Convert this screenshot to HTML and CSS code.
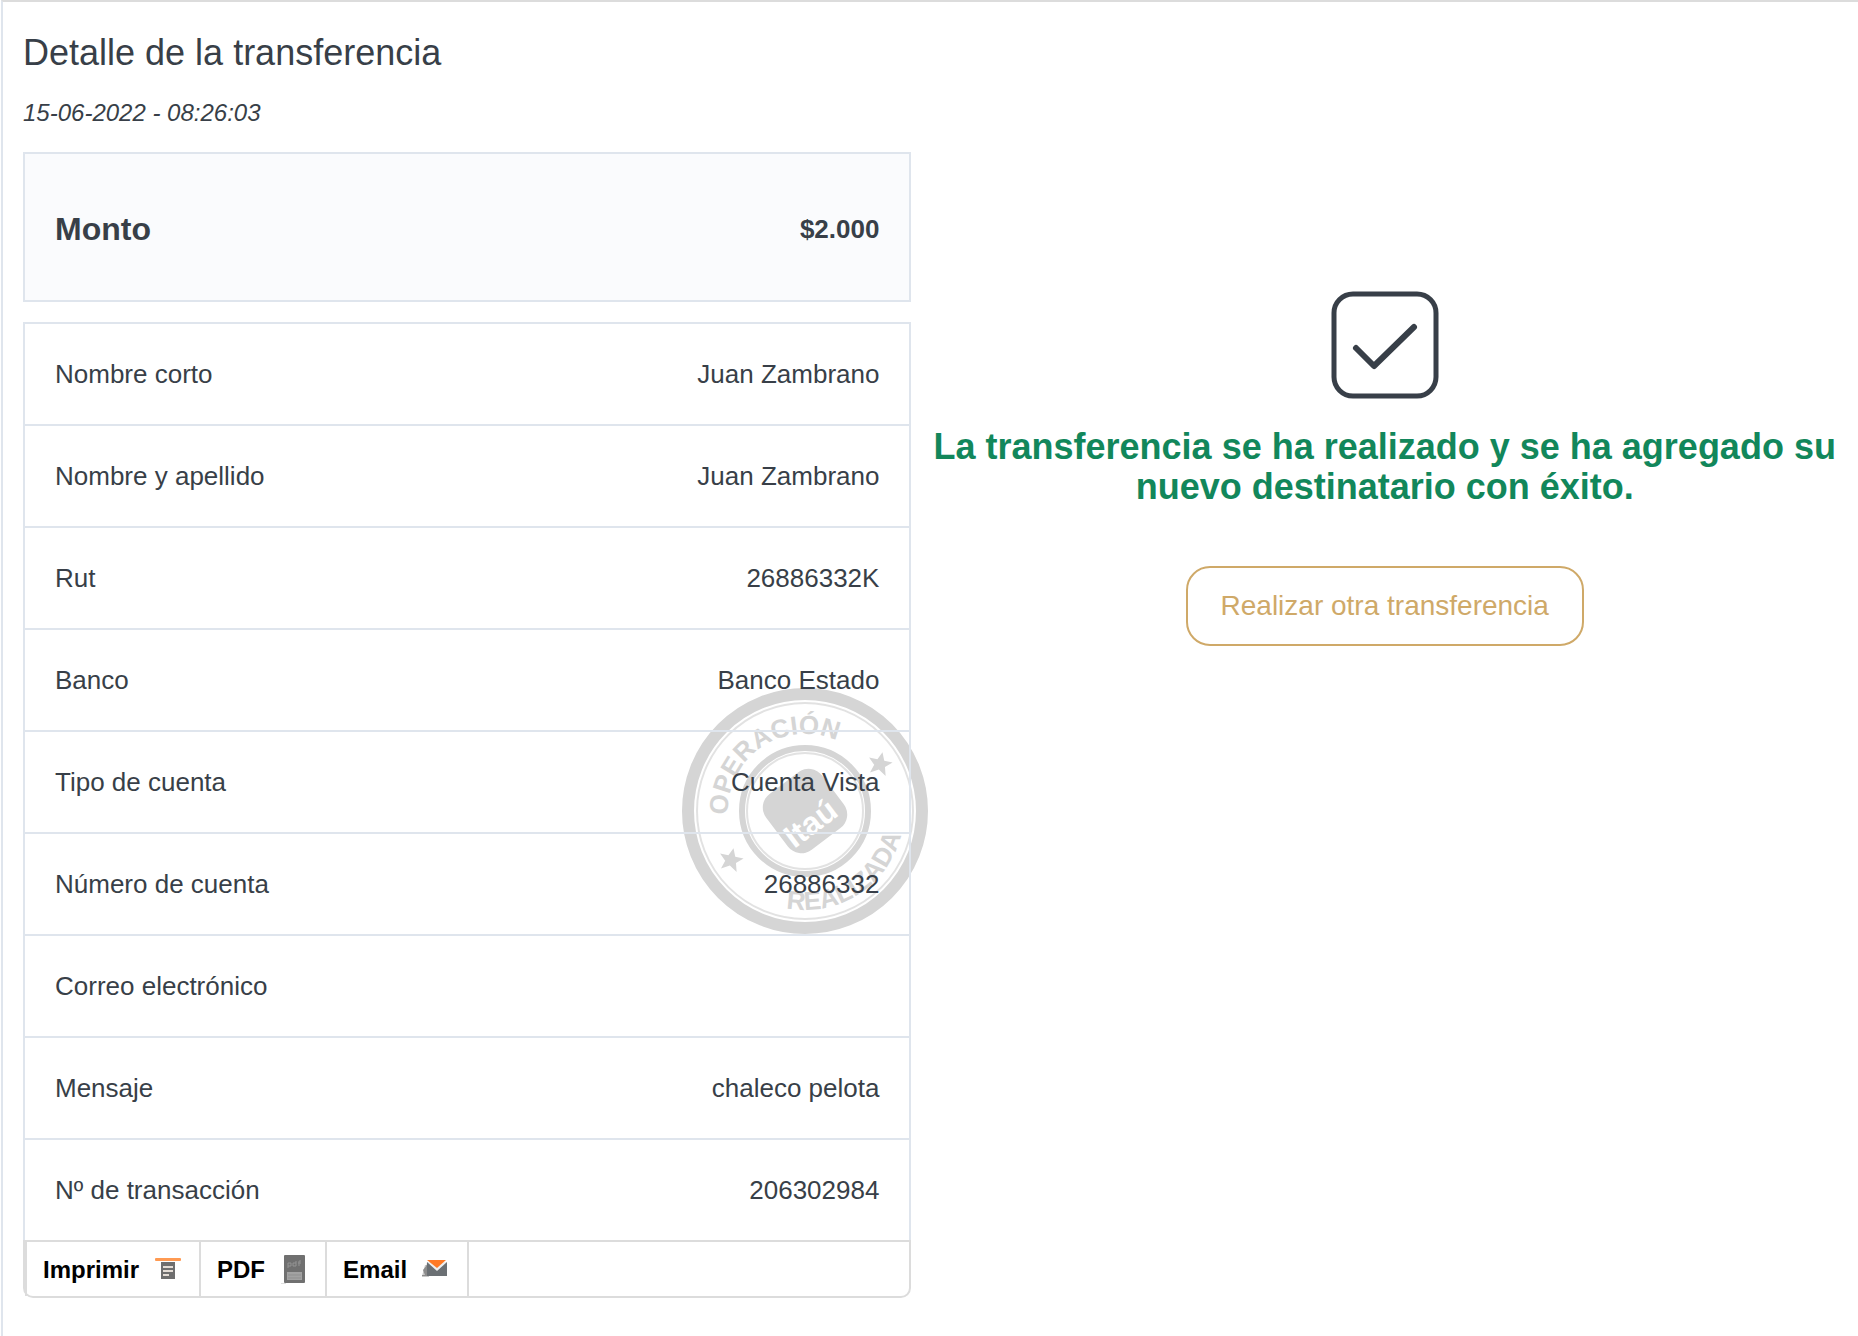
FILE: index.html
```html
<!DOCTYPE html>
<html lang="es">
<head>
  <meta charset="utf-8">
  <meta name="viewport" content="width=device-width, initial-scale=1">
  <title>Detalle de la transferencia</title>
  <link rel="stylesheet" href="styles.css">
</head>
<body>
  <main class="page">
    <section class="detail">
      <h1 class="title">Detalle de la transferencia</h1>
      <p class="date"><time datetime="2022-06-15T08:26:03">15-06-2022 - 08:26:03</time></p>

      <div class="amount">
        <span class="amount-label">Monto</span>
        <span class="amount-value">$2.000</span>
      </div>

      <div class="receipt">
        <svg class="stamp" viewBox="-123 -123 246 246" aria-label="Operación realizada">
          <defs>
            <path id="arc-top" d="M-77 4 A77 77 0 0 1 77 -4"/>
            <path id="arc-bottom" d="M-99 0 A99 99 0 0 0 99 0"/>
          </defs>
          <g class="stamp-rings">
            <circle r="117" stroke-width="12"/>
            <circle r="108" stroke-width="2" opacity=".7"/>
            <circle r="63" stroke-width="6"/>
            <circle r="58" stroke-width="2" opacity=".7"/>
          </g>
          <text class="stamp-text"><textPath href="#arc-top">OPERACIÓN</textPath></text>
          <text class="stamp-text" text-anchor="middle"><textPath href="#arc-bottom" startOffset="68%">REALIZADA</textPath></text>
          <path class="stamp-fill" transform="translate(75 -47) rotate(12)" d="M0-12 3.5-4 12-4 5.5 2 8 10.500 0 5.500-8 10.500-5.500 2-12-4-3.500-4Z"/>
          <path class="stamp-fill" transform="translate(-74 49) rotate(12)" d="M0-12 3.5-4 12-4 5.5 2 8 10.500 0 5.500-8 10.500-5.500 2-12-4-3.500-4Z"/>
          <g transform="rotate(-37)">
            <rect class="stamp-fill" x="-35" y="-35" width="70" height="70" rx="17"/>
            <text class="stamp-brand" x="-3" y="24" text-anchor="middle">Itaú</text>
          </g>
        </svg>

        <table class="fields">
          <tbody>
            <tr><th scope="row">Nombre corto</th><td>Juan Zambrano</td></tr>
            <tr><th scope="row">Nombre y apellido</th><td>Juan Zambrano</td></tr>
            <tr><th scope="row">Rut</th><td>26886332K</td></tr>
            <tr><th scope="row">Banco</th><td>Banco Estado</td></tr>
            <tr><th scope="row">Tipo de cuenta</th><td>Cuenta Vista</td></tr>
            <tr><th scope="row">Número de cuenta</th><td>26886332</td></tr>
            <tr><th scope="row">Correo electrónico</th><td></td></tr>
            <tr><th scope="row">Mensaje</th><td>chaleco pelota</td></tr>
            <tr><th scope="row">Nº de transacción</th><td>206302984</td></tr>
          </tbody>
        </table>
      </div>

      <div class="actions">
        <button class="action" type="button">Imprimir
          <svg class="action-icon" viewBox="0 0 28 32" aria-hidden="true">
            <rect x="1" y="4" width="26" height="3" rx="1" fill="#ff9a52"/>
            <rect x="7" y="8" width="14" height="17" fill="#6e6e6e"/>
            <path d="M9 13h10M9 17h10M9 21h6" stroke="#e4ddd6" stroke-width="2"/>
          </svg>
        </button>
        <button class="action" type="button">PDF
          <svg class="action-icon" viewBox="0 0 28 32" aria-hidden="true">
            <path d="M1 29.500h5" stroke="#dedede"/>
            <rect x="4" y="1" width="21" height="28" rx="1" fill="#707070"/>
            <path d="M8 9v5M8 9h3v3H8M16 7v5h-3V9h3M19 12V7h2M18 9h3" fill="none" stroke="#949494"/>
            <rect x="7" y="18" width="15" height="8" fill="#a2a2a2"/>
            <path d="M8 21h13M8 24h13" stroke="#8f8f8f"/>
          </svg>
        </button>
        <button class="action" type="button">Email
          <svg class="action-icon" viewBox="2 0 28 32" aria-hidden="true">
            <path d="M2 22 5 11h4v12H2Z" fill="#c9c9c9"/>
            <path d="M7 8h20v14H6Z" fill="#6b7074"/>
            <path d="M3 16 7 11v11H2v-1h3Z" fill="#8c8c8c"/>
            <path d="M7 8h20l-10 9Z" fill="#eef0f1"/>
            <path d="M7 6h19l-9 8Z" fill="#ff7a26"/>
          </svg>
        </button>
      </div>
    </section>

    <section class="result">
      <svg class="result-icon" viewBox="0 0 108 108" aria-hidden="true">
        <rect x="3" y="3" width="102" height="102" rx="19"/>
        <path d="M25 57 43 75 83 36" stroke-width="6"/>
      </svg>
      <h2 class="result-message">La transferencia se ha realizado y se ha agregado su nuevo destinatario con éxito.</h2>
      <button class="again" type="button">Realizar otra transferencia</button>
    </section>
  </main>
</body>
</html>
```

FILE: styles.css
```css
* {
  box-sizing: border-box;
}

body {
  margin: 0;
  background: #fff;
  color: #383f48;
  font-family: "Liberation Sans", Arial, sans-serif;
  font-size: 26px;
}

.page {
  display: grid;
  grid-template-columns: minmax(0, 49fr) minmax(0, 50fr);
  column-gap: 20px;
  min-height: 100vh;
  margin-left: 1px;
  padding: 31px 20px 32px;
  border-top: 2px solid #dcdcdc;
  border-left: 2px solid #dfe5ed;
}

.title {
  margin: 0 0 26px;
  font-size: 36px;
  font-weight: 400;
  line-height: 40px;
}

.date {
  margin: 0 0 25px;
  font-size: 24px;
  font-style: italic;
  line-height: 28px;
}

.amount {
  display: flex;
  align-items: center;
  justify-content: space-between;
  min-height: 150px;
  margin-bottom: 20px;
  padding: 4px 30px 0;
  border: 2px solid #dfe5ed;
  background: #fafbfd;
  font-weight: 700;
}

.amount-label {
  font-size: 32px;
}

.receipt {
  position: relative;
}

.stamp {
  position: absolute;
  top: 366px;
  right: -17px;
  width: 246px;
  height: 246px;
}

.stamp-rings {
  fill: none;
  stroke: #d5d5d5;
}

.stamp-fill,
.stamp-text {
  fill: #d5d5d5;
}

.stamp-text {
  font-size: 26px;
  font-weight: 700;
}

.stamp-brand {
  fill: #fff;
  font-size: 32px;
  font-weight: 700;
}

.fields {
  position: relative;
  width: 100%;
  border: 2px solid #dfe5ed;
  border-bottom: 0;
  border-spacing: 0;
}

.fields th,
.fields td {
  height: 102px;
  padding: 0 30px;
  border-bottom: 2px solid #dfe5ed;
  font-weight: 400;
  text-align: left;
}

.fields td {
  text-align: right;
}

.fields tr:last-child > * {
  height: 100px;
  border-bottom: 0;
}

.actions {
  display: flex;
  height: 58px;
  border: 2px solid #dcdcdc;
  border-radius: 0 0 10px 10px;
}

.action {
  display: flex;
  align-items: center;
  gap: 15px;
  padding: 2px 17px 0 16px;
  border: 0;
  border-right: 2px solid #dcdcdc;
  background: none;
  color: #000;
  font: 700 24px "Liberation Sans", Arial, sans-serif;
}

.action:first-child {
  border-left: 2px solid #dcdcdc;
}

.action-icon {
  width: 28px;
  height: 32px;
}

.result {
  display: flex;
  flex-direction: column;
  align-items: center;
  padding-top: 258px;
}

.result-icon {
  width: 108px;
  height: 108px;
  fill: none;
  stroke: #383f48;
  stroke-width: 5;
  stroke-linecap: round;
  stroke-linejoin: round;
}

.result-message {
  margin: 28px 0 59px;
  color: #12875b;
  font-size: 36px;
  line-height: 40px;
  text-align: center;
}

.again {
  height: 80px;
  padding: 0 33px;
  border: 2px solid #cfa968;
  border-radius: 24px;
  background: #fff;
  color: #cfa968;
  font: 28px "Liberation Sans", Arial, sans-serif;
}
```
